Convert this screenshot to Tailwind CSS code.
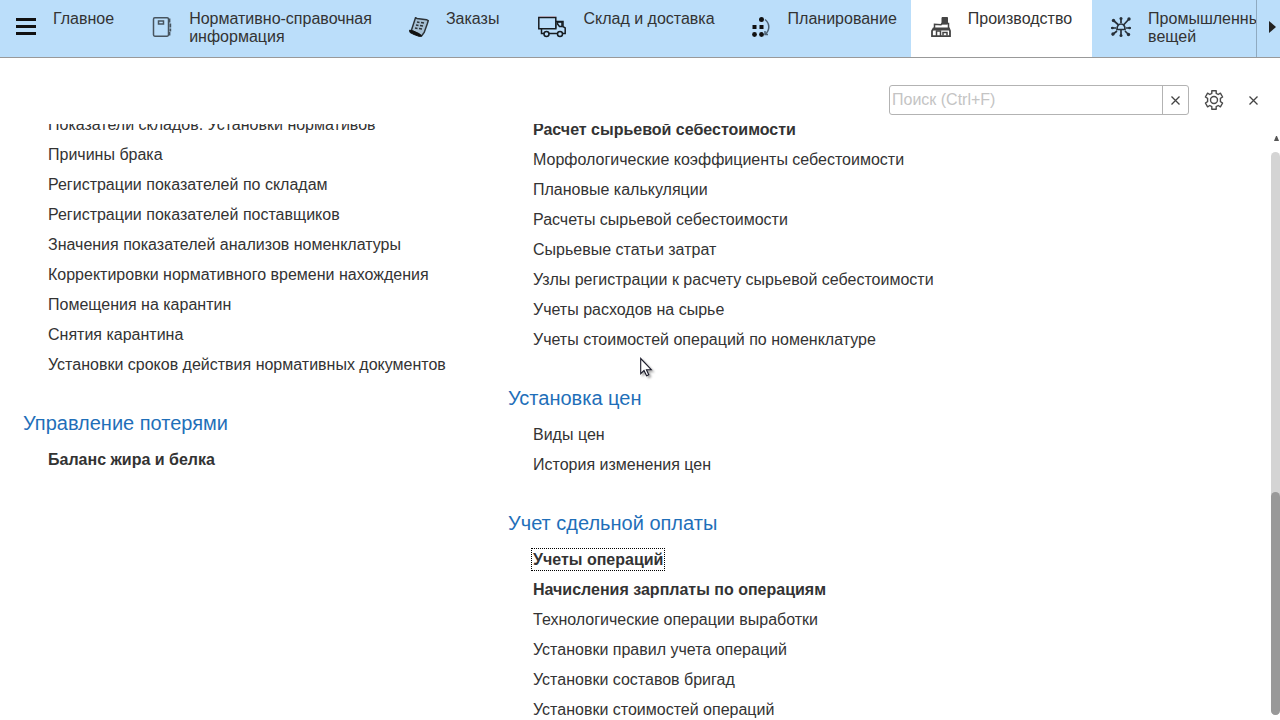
<!DOCTYPE html>
<html lang="ru">
<head>
<meta charset="utf-8">
<meta name="viewport" content="width=device-width, initial-scale=1">
<title>Производство</title>
<script src="https://cdn.jsdelivr.net/npm/@tailwindcss/browser@4"></script>
</head>
<body class="flex h-screen flex-col overflow-hidden bg-white font-['Liberation_Sans',Arial,sans-serif] text-base text-[#333]">
<header class="flex h-[58px] shrink-0 border-b border-[#999] bg-[#bbdefa]">
  <nav class="flex min-w-0 flex-1 overflow-hidden leading-[18px]" aria-label="Разделы">
    <a href="#" class="flex shrink-0 gap-[17px] pl-4 pr-[19px] pt-[10px]">
      <svg class="mt-[7px] h-5 w-5" viewBox="0 0 20 20" fill="#111"><path d="M0 1h20v3H0zM0 8h20v3H0zM0 15h20v3H0z"/></svg>
      <span>Главное</span>
    </a>
    <a href="#" class="flex shrink-0 gap-[17px] pl-[19px] pr-[18px] pt-[10px]">
      <svg class="mt-[7px] h-5 w-5" viewBox="0 0 20 20" fill="none" stroke="#47545f" stroke-width="1.500"><path d="M2.800.8h12.400q1.300 0 1.300 1.400v15.600q0 1.400-1.300 1.400H2.800q-1.300 0-1.300-1.400V2.200Q1.500.8 2.800.8z"/><path d="M6.500 4h5v3h-5z"/><path d="M17.500 1.500v4M18.300 6.500v4M18.300 11.500v3M17.500 15v3.500" stroke-width="1.800"/></svg>
      <span>Нормативно-справочная<br>информация</span>
    </a>
    <a href="#" class="flex shrink-0 gap-[17px] pl-[19px] pr-5 pt-[10px]">
      <svg class="mt-[7px] h-5 w-5" viewBox="0 0 20 20" fill="none" stroke="#2d3439" stroke-width="1.500"><path d="M6.500.8l1.500.7 9.500 1.200 1.700 1-1 3.300-3 8.500-2.700 3.500-2-1-8.500-3.500z" fill="#a5bfd3"/><path d="M.5 13.200l3.500.6 6.500 3 2 2.200-2 .5L5 17.500 1 15.500z" fill="#111" stroke="#111" stroke-width="1"/><path d="M8 5l2.500.4m1.500.2 3 .5M7 8l2.500.4m1.500.2 3 .5M6 11l2.500.4m1.500.2 3 .5"/></svg>
      <span>Заказы</span>
    </a>
    <a href="#" class="flex shrink-0 gap-[17px] pl-[19px] pr-[17px] pt-[10px]">
      <svg class="mt-[6px] h-[22px] w-7" viewBox="0 0 28 22" fill="none" stroke="#171c20" stroke-width="1.500"><path d="M.8 1.500h17v11.200H.8zM3.500 13v4.500h2.700M11 17.500h8.500M24.500 17.500h2.700V12L25 10.500V5.500h-7M18 12.500V5.500"/><path d="M19.500 6h4.500v4.500h-2.500L19.500 8z"/><circle cx="8.500" cy="18" r="2.500"/><circle cx="22" cy="18" r="2.500"/><path d="M1 .5h17" stroke="#b598a8" stroke-width=".7"/></svg>
      <span>Склад и доставка</span>
    </a>
    <a href="#" class="flex shrink-0 gap-[17px] pl-[19px] pr-[14px] pt-[10px]">
      <svg class="mt-[7px] h-5 w-5" viewBox="0 0 20 20" fill="#111"><circle cx="10.500" cy="2.500" r="2.500"/><path d="M1.500 8h4v4h-4zM8.500 8h4v4h-4z"/><circle cx="3.500" cy="17.500" r="2.400"/><circle cx="10.500" cy="17.500" r="2.400"/><path d="M14 2.500q3.800 3 3.800 7.500T14 17.500M14 14v3.500h3" fill="none" stroke="#4d6274" stroke-width="1.500"/></svg>
      <span>Планирование</span>
    </a>
    <a href="#" aria-current="page" class="flex shrink-0 gap-[17px] bg-white pl-5 pr-5 pt-[10px]">
      <svg class="mt-[7px] h-5 w-5" viewBox="0 0 20 20" fill="none" stroke="#444" stroke-width="1.500"><path d="M11 .5h5.500v6.500H11z" fill="#444" stroke-width="1"/><path d="M3.500 11V7.200l6.500.5 1-1.200h6.500V11"/><path d="M2.500 11.500h15.500l1 2.500v5.200H1V14zM1.500 12.500h17" stroke-width="1.800"/><path d="M5.500 19v-5h4v5M12 18.500v-3h4v3"/></svg>
      <span>Производство</span>
    </a>
    <a href="#" class="flex shrink-0 gap-[17px] pl-[19px] pr-5 pt-[10px]">
      <svg class="mt-[7px] h-5 w-5" viewBox="0 0 20 20" fill="none" stroke="#273039" stroke-width="1.700"><path d="M6 12.500q0-5.500 4-5.500t4 5.500zM10 6V1M7 7.500L2 3M13 7.500L18 2M5 11H0M15 11h5M6 14l-5 4M14 14l4 4M10 13v6"/><g fill="#273039" stroke="none"><circle cx="10" cy="1.500" r="1.500"/><circle cx="2.500" cy="3.500" r="1.700"/><circle cx="18" cy="2" r="1.700"/><circle cx="1.500" cy="11" r="1.300"/><circle cx="18.500" cy="11" r="1.300"/><circle cx="2" cy="17" r="1.700"/><circle cx="17.500" cy="17.500" r="1.700"/><circle cx="10" cy="18.500" r="1.500"/></g></svg>
      <span>Промышленный интернет<br>вещей</span>
    </a>
  </nav>
  <button aria-label="Следующие разделы" class="flex w-6 shrink-0 items-center justify-end border-l border-[#8faac0] pb-[3px] pr-1">
    <svg class="h-3 w-[7px]" viewBox="0 0 7 12" fill="#222"><path d="M0 0l7 6-7 6z"/></svg>
  </button>
</header>

<div class="flex h-[66px] shrink-0 items-start justify-end pr-[22px] pt-[27px]">
  <form class="flex h-[30px] w-[300px] overflow-hidden rounded-[3px] border border-[#b3b3b3]">
    <input type="text" aria-label="Поиск" placeholder="Поиск (Ctrl+F)" class="min-w-0 flex-1 px-[2px] outline-none placeholder:text-[#c4c4c4]">
    <button type="button" aria-label="Очистить" class="flex w-[26px] items-center justify-center border-l border-[#b3b3b3]">
      <svg class="h-[9px] w-[9px]" viewBox="0 0 9 9" stroke="#444" stroke-width="1.300"><path d="M.5.5l8 8M8.500.5l-8 8"/></svg>
    </button>
  </form>
  <button aria-label="Настройки" class="ml-[15px] mt-[5px]">
    <svg class="h-5 w-5" viewBox="0 0 20 20" fill="none" stroke="#4a4a4a" stroke-width="1.400" stroke-linejoin="round"><path d="M7.800.8h4.400v2.600l2 1.100 2.200-1.300 2.200 3.800-2.200 1.300v3.400l2.200 1.300-2.200 3.800-2.200-1.300-2 1.100v2.600H7.800v-2.600l-2-1.100-2.200 1.300-2.200-3.800 2.200-1.300V8.300L1.400 7l2.200-3.800 2.200 1.300 2-1.100z"/><circle cx="10" cy="10" r="3.500"/></svg>
  </button>
  <button aria-label="Закрыть" class="ml-[25px] mt-[11px]">
    <svg class="h-[9px] w-[9px]" viewBox="0 0 9 9" stroke="#444" stroke-width="1.300"><path d="M.5.5l8 8M8.500.5l-8 8"/></svg>
  </button>
</div>

<div class="flex min-h-0 flex-1">
  <main class="flex min-w-0 flex-1 overflow-hidden pl-[23px] leading-[30px]">
    <div class="-mt-[14px] w-[485px] shrink-0">
      <ul class="pl-[25px]">
        <li><a href="#">Показатели складов. Установки нормативов</a></li>
        <li><a href="#">Причины брака</a></li>
        <li><a href="#">Регистрации показателей по складам</a></li>
        <li><a href="#">Регистрации показателей поставщиков</a></li>
        <li><a href="#">Значения показателей анализов номенклатуры</a></li>
        <li><a href="#">Корректировки нормативного времени нахождения</a></li>
        <li><a href="#">Помещения на карантин</a></li>
        <li><a href="#">Снятия карантина</a></li>
        <li><a href="#">Установки сроков действия нормативных документов</a></li>
      </ul>
      <h2 class="mb-[7px] mt-7 text-xl leading-[30px] text-[#1f6fb9]">Управление потерями</h2>
      <ul class="pl-[25px]">
        <li><a href="#" class="font-bold">Баланс жира и белка</a></li>
      </ul>
    </div>
    <div class="-mt-[9px] min-w-0 flex-1">
      <ul class="pl-[25px]">
        <li><a href="#" class="font-bold">Расчет сырьевой себестоимости</a></li>
        <li><a href="#">Морфологические коэффициенты себестоимости</a></li>
        <li><a href="#">Плановые калькуляции</a></li>
        <li><a href="#">Расчеты сырьевой себестоимости</a></li>
        <li><a href="#">Сырьевые статьи затрат</a></li>
        <li><a href="#">Узлы регистрации к расчету сырьевой себестоимости</a></li>
        <li><a href="#">Учеты расходов на сырье</a></li>
        <li><a href="#">Учеты стоимостей операций по номенклатуре</a></li>
      </ul>
      <h2 class="mb-[7px] mt-7 text-xl leading-[30px] text-[#1f6fb9]">Установка цен</h2>
      <ul class="pl-[25px]">
        <li><a href="#">Виды цен</a></li>
        <li><a href="#">История изменения цен</a></li>
      </ul>
      <h2 class="mb-[7px] mt-7 text-xl leading-[30px] text-[#1f6fb9]">Учет сдельной оплаты</h2>
      <ul class="pl-[25px]">
        <li><a href="#" class="-mx-[2px] border border-dotted border-black px-px py-[2px] font-bold">Учеты операций</a></li>
        <li><a href="#" class="font-bold">Начисления зарплаты по операциям</a></li>
        <li><a href="#">Технологические операции выработки</a></li>
        <li><a href="#">Установки правил учета операций</a></li>
        <li><a href="#">Установки составов бригад</a></li>
        <li><a href="#">Установки стоимостей операций</a></li>
      </ul>
    </div>
  </main>
  <div class="flex w-[9px] shrink-0 flex-col items-end pb-[5px]">
    <svg class="mb-[11px] mt-3 h-[5px] w-[7px] shrink-0" viewBox="0 0 7 5" fill="#555"><path d="M3 0h1l2 5H1z"/></svg>
    <div class="flex w-full flex-1 flex-col justify-end rounded-full bg-[#d4d4d4]">
      <div class="w-full rounded-full bg-[#999]" style="height:39.700%"></div>
    </div>
  </div>
</div>

<svg class="pointer-events-none absolute left-[640px] top-[357px] h-[22px] w-4 drop-shadow-[2px_2px_1px_rgba(0,0,0,0.35)]" viewBox="0 0 16 22" fill="#fff" stroke="#1a1a2a" stroke-width="1.100" aria-hidden="true"><path d="M.7 1.500v15.200l3.300-3.200 2.600 5.300 2.200-1-2.400-5.100h4.900z"/></svg>
</body>
</html>
